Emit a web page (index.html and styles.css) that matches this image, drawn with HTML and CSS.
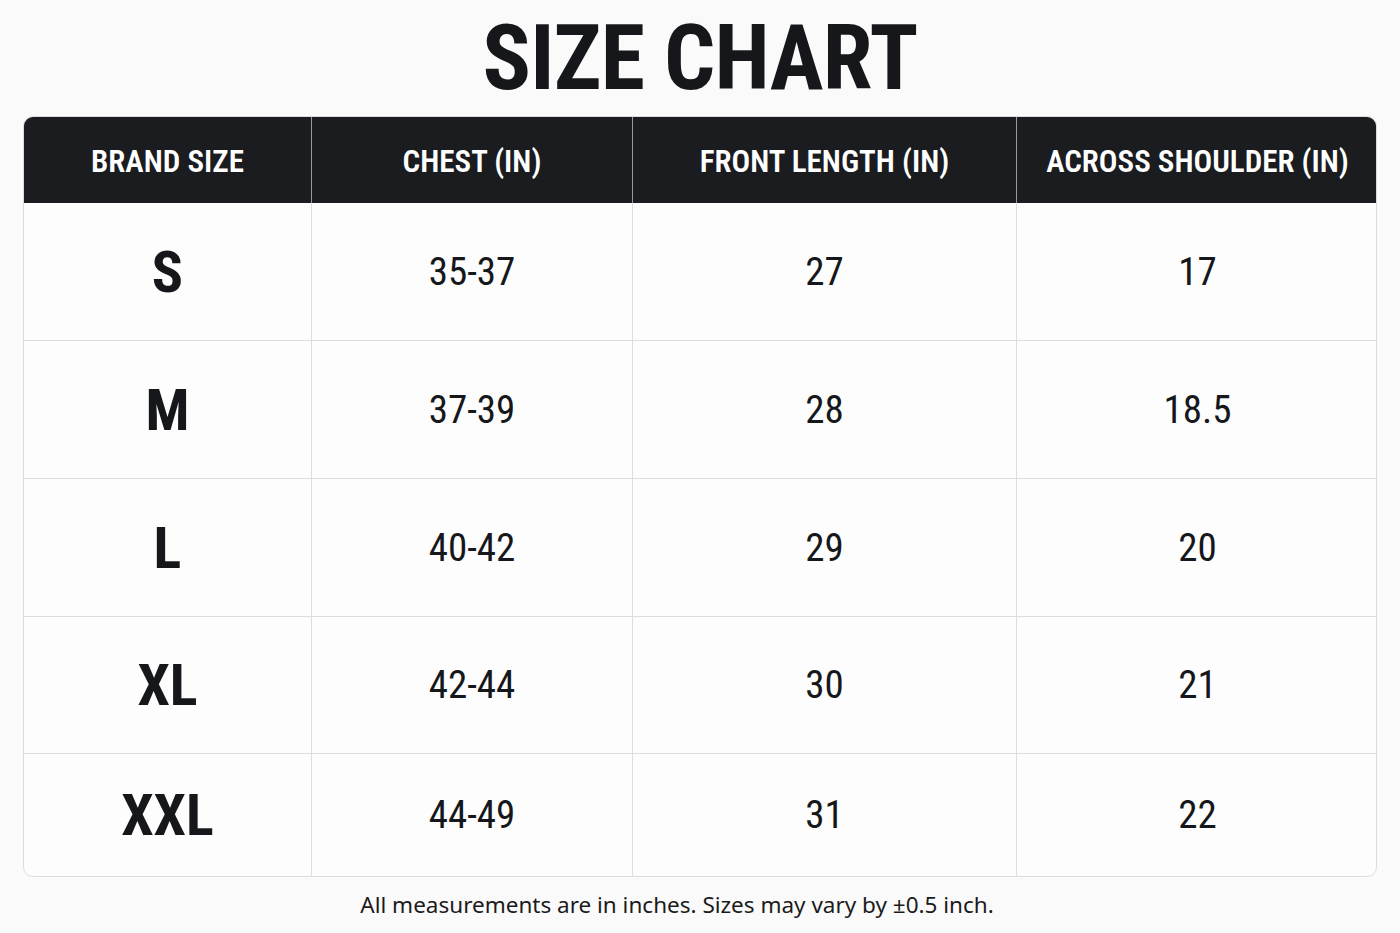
FILE: index.html
```html
<!DOCTYPE html>
<html>
<head>
<meta charset="utf-8">
<link rel="stylesheet" href="styles.css">
</head>
<body>
<main class="page">
  <h1 class="title">SIZE CHART</h1>
  <div class="chart">
    <div class="cell head">BRAND SIZE</div>
    <div class="cell head">CHEST (IN)</div>
    <div class="cell head">FRONT LENGTH (IN)</div>
    <div class="cell head">ACROSS SHOULDER (IN)</div>

    <div class="cell size">S</div>
    <div class="cell val">35-37</div>
    <div class="cell val">27</div>
    <div class="cell val">17</div>

    <div class="cell size">M</div>
    <div class="cell val">37-39</div>
    <div class="cell val">28</div>
    <div class="cell val">18.5</div>

    <div class="cell size">L</div>
    <div class="cell val">40-42</div>
    <div class="cell val">29</div>
    <div class="cell val">20</div>

    <div class="cell size">XL</div>
    <div class="cell val">42-44</div>
    <div class="cell val">30</div>
    <div class="cell val">21</div>

    <div class="cell size">XXL</div>
    <div class="cell val">44-49</div>
    <div class="cell val">31</div>
    <div class="cell val">22</div>
  </div>
  <p class="note">All measurements are in inches. Sizes may vary by ±0.5 inch.</p>
</main>
</body>
</html>
```
FILE: styles.css
```css
html, body {
  margin: 0;
  padding: 0;
  background: #fafafa;
}
.page {
  width: 1400px;
  height: 933px;
  display: flex;
  flex-direction: column;
  align-items: center;
}
.title {
  margin: 0;
  height: 116px;
  display: flex;
  align-items: center;
  justify-content: center;
  font-family: Roboto, "Liberation Sans", sans-serif;
  font-weight: 700;
  font-stretch: 75%;
  font-size: 90px;
  letter-spacing: -0.8px;
  color: #15171a;
}
.chart {
  width: 1354px;
  display: grid;
  grid-template-columns: 288px 321px 384px 361px;
  grid-template-rows: 86px 138px 138px 138px 137px 122px;
  border: 1px solid #dcdcdc;
  border-radius: 10px;
  overflow: hidden;
  background: #fdfdfd;
  box-sizing: border-box;
}
.cell {
  display: flex;
  align-items: center;
  justify-content: center;
  font-family: Roboto, "Liberation Sans", sans-serif;
  font-stretch: 75%;
  color: #15171a;
  border-right: 1px solid #dddddd;
  border-bottom: 1px solid #dddddd;
}
.cell:nth-child(4n) {
  border-right: none;
}
.cell:nth-last-child(-n+4) {
  border-bottom: none;
}
.head {
  background: #1a1c1f;
  color: #ffffff;
  font-weight: 600;
  font-size: 31px;
  padding-top: 2px;
  border-right-color: #9a9a9a;
  border-bottom: none;
}
.size {
  font-weight: 700;
  font-size: 58px;
}
.val {
  font-weight: 400;
  font-size: 39px;
}
.note {
  margin: 12px 0 0;
  padding-right: 46px;
  font-family: "Noto Sans", "Open Sans", sans-serif;
  font-size: 22.5px;
  color: #1b1b1b;
}
```
